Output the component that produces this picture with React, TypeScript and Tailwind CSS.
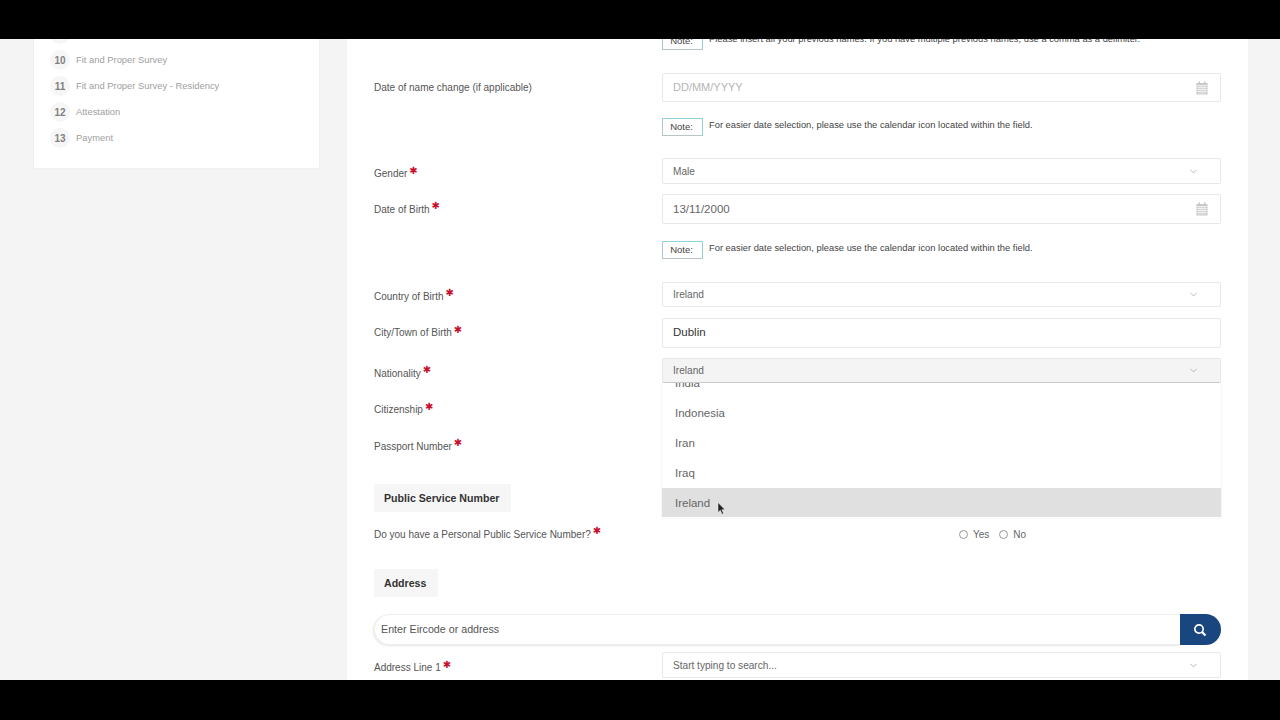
import { ChevronDown } from 'lucide-react';

const steps = [
  { n: 9, label: '' },
  { n: 10, label: 'Fit and Proper Survey' },
  { n: 11, label: 'Fit and Proper Survey - Residency' },
  { n: 12, label: 'Attestation' },
  { n: 13, label: 'Payment' },
];

const options = ['India', 'Indonesia', 'Iran', 'Iraq'];

const Star = () => (
  <span className="ml-[2px] text-[10px] leading-none text-[#c8102e] relative -top-[3px] font-['DejaVu_Sans',sans-serif]">✱</span>
);

const Calendar = () => (
  <svg width="12" height="14" viewBox="0 0 12 14" className="text-[#c8c8c8]">
    <rect x="0.5" y="2" width="11" height="11.5" fill="currentColor" rx="0.5" />
    <rect x="2.5" y="0.5" width="1.5" height="2.5" fill="currentColor" />
    <rect x="8" y="0.5" width="1.5" height="2.5" fill="currentColor" />
    <path d="M1 4.5h10M1 6.5h10M1 8.5h10M1 10.5h10M3 4.5v8.5M5 4.5v8.5M7 4.5v8.5M9 4.5v8.5" stroke="#fff" strokeWidth="0.6" />
  </svg>
);

const Label = ({ text, required, offset }: { text: string; required?: boolean; offset?: string }) => (
  <div className={`flex items-center text-[10px] text-[#555] ${offset ?? ''}`}>
    <span>{text}</span>
    {required && <Star />}
  </div>
);

const Select = ({ value, open }: { value: string; open?: boolean }) => (
  <div className={`h-full flex items-center justify-between pl-[10px] pr-[21px] border border-[#e8e8e8] rounded-[2px] text-[10.1px] text-[#666] ${open ? 'bg-[#f4f4f4] border-b-[#d2d2d2]' : 'bg-white'}`}>
    <span className="pt-[1px]">{value}</span>
    <ChevronDown className="w-[11px] h-[11px] text-[#999]" strokeWidth={1.5} />
  </div>
);

const DateInput = ({ value, placeholder }: { value?: string; placeholder?: string }) => (
  <div className="h-full flex items-center justify-between pl-[10px] pr-[12px] border border-[#e8e8e8] rounded-[2px] bg-white">
    {value ? <span className="pt-[1px] text-[11.5px] text-[#666]">{value}</span> : <span className="text-[11px] text-[#b5b5b5]">{placeholder}</span>}
    <Calendar />
  </div>
);

const Note = ({ text }: { text: string }) => (
  <div className="flex items-start h-[18px]">
    <div className="w-[41px] h-[18px] pr-[2px] flex items-center justify-center border border-[#8fd3de] border-l-[#b9c4c6] border-b-[#b9c4c6] text-[9.5px] text-[#444] bg-white">Note:</div>
    <span className="ml-[6px] text-[9.35px] leading-[14px] text-[#444]">{text}</span>
  </div>
);

const Row = ({ className, label, children }: { className: string; label?: React.ReactNode; children?: React.ReactNode }) => (
  <div className={`grid grid-cols-[288px_559px] items-center ${className}`}>
    <div>{label}</div>
    <div className="h-full relative">{children}</div>
  </div>
);

export default function App() {
  return (
    <div className="w-[1280px] h-[720px] flex flex-col bg-black overflow-hidden font-['Liberation_Sans',Arial,sans-serif]">
      <div className="h-[39px] shrink-0 bg-black" />
      <div className="h-[641px] shrink-0 flex bg-[#f4f4f4] overflow-hidden">
        <aside className="w-[347px] shrink-0 pl-[34px] pr-[28px]">
          <div className="bg-white shadow-[0_0_2px_rgba(0,0,0,0.06)] -mt-[15px] h-[144px] pl-[16px] overflow-hidden">
            <div className="flex flex-col gap-[6px]">
              {steps.map(s => (
                <div key={s.n} className="flex items-center h-[20px]">
                  <span className="w-[20px] h-[20px] rounded-full bg-[#f6f6f6] flex items-center justify-center text-[10px] font-bold text-[#808080]">{s.n}</span>
                  <span className="ml-[6px] pt-[1px] text-[9.4px] text-[#a0a0a0]">{s.label}</span>
                </div>
              ))}
            </div>
          </div>
        </aside>

        <main className="w-[901px] shrink-0 bg-white pl-[27px]">
          <Row className="-mt-[7px]">
            <Note text="Please insert all your previous names. If you have multiple previous names, use a comma as a delimiter." />
          </Row>
          <Row className="mt-[23px] h-[29px]" label={<Label text="Date of name change (if applicable)" />}>
            <DateInput placeholder="DD/MM/YYYY" />
          </Row>
          <Row className="mt-[16px]">
            <Note text="For easier date selection, please use the calendar icon located within the field." />
          </Row>
          <Row className="mt-[22px] h-[26px]" label={<Label text="Gender" required offset="mt-[5px]" />}>
            <Select value="Male" />
          </Row>
          <Row className="mt-[10px] h-[30px]" label={<Label text="Date of Birth" required />}>
            <DateInput value="13/11/2000" />
          </Row>
          <Row className="mt-[17px]">
            <Note text="For easier date selection, please use the calendar icon located within the field." />
          </Row>
          <Row className="mt-[23px] h-[25px]" label={<Label text="Country of Birth" required offset="mt-[3px]" />}>
            <Select value="Ireland" />
          </Row>
          <Row className="mt-[11px] h-[30px]" label={<Label text="City/Town of Birth" required offset="-mt-[1px]" />}>
            <div className="h-full flex items-center pl-[10px] border border-[#e8e8e8] rounded-[2px] text-[11.5px] font-medium text-[#333]">Dublin</div>
          </Row>
          <Row className="mt-[10px] h-[25px] relative z-10" label={<Label text="Nationality" required offset="mt-[5px]" />}>
            <Select value="Ireland" open />
            <div className="absolute left-0 right-0 top-full h-[135px] bg-white shadow-[0_0_2px_rgba(0,0,0,0.1)] overflow-hidden flex flex-col justify-end pb-[1px]">
              {options.map(o => (
                <div key={o} className="h-[30px] shrink-0 flex items-center pl-[13px] pt-[2px] text-[11.5px] text-[#666]">{o}</div>
              ))}
              <div className="h-[29px] shrink-0 flex items-center pl-[13px] pt-[2px] text-[11.5px] text-[#666] bg-[#e0e0e0]">Ireland</div>
              <svg width="9" height="13" viewBox="0 0 9 13" className="absolute left-[55px] bottom-[3px]">
                <path d="M1 0.5v10l2.3-2.2 1.7 4 1.6-.7-1.7-3.9h3.2z" fill="#222" stroke="#fff" strokeWidth="0.5" />
              </svg>
            </div>
          </Row>
          <Row className="mt-[14px] h-[25px]" label={<Label text="Citizenship" required />} />
          <Row className="mt-[12px] h-[25px]" label={<Label text="Passport Number" required offset="-mt-[1px]" />} />
          <div className="mt-[25px] h-[28px] w-[137px] pt-[2px] bg-[#f6f6f6] flex items-center pl-[10px] text-[10.6px] font-bold text-[#333]">Public Service Number</div>
          <Row className="mt-[12px] h-[20px]" label={<Label text="Do you have a Personal Public Service Number?" required />}>
            <div className="h-full flex items-center pl-[297px] text-[10px] text-[#666]">
              <span className="w-[9px] h-[9px] rounded-full border border-[#999]" />
              <span className="ml-[5px]">Yes</span>
              <span className="ml-[10px] w-[9px] h-[9px] rounded-full border border-[#999]" />
              <span className="ml-[5px]">No</span>
            </div>
          </Row>
          <div className="mt-[25px] h-[28px] w-[64px] pt-[2px] bg-[#f6f6f6] flex items-center pl-[10px] text-[10.6px] font-bold text-[#333]">Address</div>
          <div className="mt-[17px] h-[31px] w-[847px] flex">
            <div className="flex-1 flex items-center pl-[6px] rounded-l-full border border-r-0 border-[#eeeeee] shadow-[-1px_1px_2px_rgba(0,0,0,0.1)] text-[10.7px] text-[#555]">Enter Eircode or address</div>
            <div className="w-[41px] pr-[2px] bg-[#1a4680] rounded-r-full flex items-center justify-center">
              <svg width="14" height="14" viewBox="0 0 14 14" fill="none" stroke="#fff">
                <circle cx="6" cy="6" r="4.2" strokeWidth="1.7" />
                <path d="M9.2 9.2L12.5 12.5" strokeWidth="2.2" />
              </svg>
            </div>
          </div>
          <Row className="mt-[7px] h-[26px]" label={<Label text="Address Line 1" required offset="mt-[5px]" />}>
            <Select value="Start typing to search..." />
          </Row>
        </main>
        <div className="flex-1" />
      </div>
      <div className="flex-1 bg-black" />
    </div>
  );
}
